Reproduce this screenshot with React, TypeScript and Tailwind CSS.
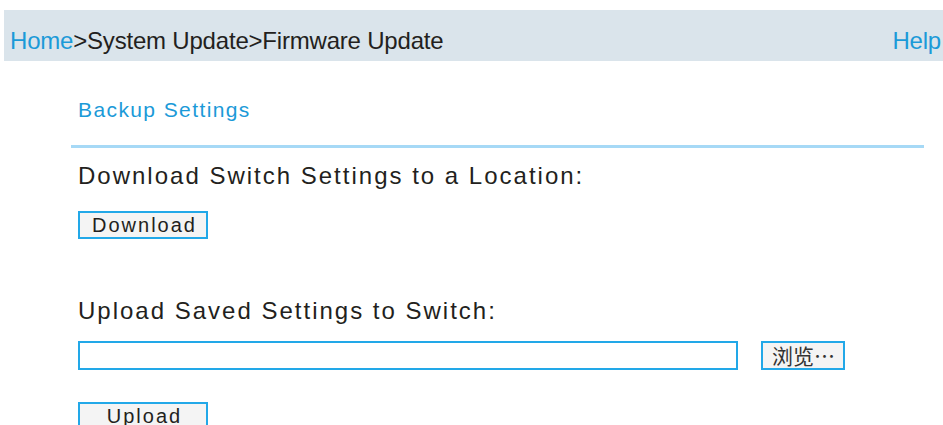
export default function App() {
  const font = { fontFamily: '"Liberation Sans", "Noto Sans CJK SC", sans-serif' };
  return (
    <div className="w-[943px] h-[425px] bg-white overflow-hidden text-[#231f20]" style={font}>
      <div className="pt-[10px] pl-[4px]">
        <div className="h-[51px] bg-[#dae4eb] flex items-start justify-between pl-[6px] pt-[19px] text-[24px] leading-none tracking-[-0.2px]">
          <div className="whitespace-nowrap">
            <span className="text-[#1b9ad8]">Home</span>
            <span>&gt;System Update&gt;Firmware Update</span>
          </div>
          <span className="text-[#1b9ad8] pr-[2px]">Help</span>
        </div>
      </div>
      <div className="pl-[71px] pr-[19px]">
        <div className="pl-[7px] mt-[39px] text-[21px] leading-[20px] tracking-[1.4px] text-[#1b9ad8]">
          Backup Settings
        </div>
        <div className="mt-[25px] h-[3px] bg-[#a6d9f6]" />
        <div className="pl-[7px]">
          <div className="mt-[16px] text-[24px] leading-[23px] tracking-[2px] whitespace-nowrap">
            Download Switch Settings to a Location:
          </div>
          <button className="mt-[24px] block w-[130px] h-[28px] border-2 border-[#22a8e8] bg-[#f4f4f4] text-[20px] leading-none tracking-[2px] pl-[3px]">
            Download
          </button>
          <div className="mt-[60px] text-[24px] leading-[23px] tracking-[2px] whitespace-nowrap">
            Upload Saved Settings to Switch:
          </div>
          <div className="mt-[19px] flex items-center gap-[23px]">
            <div className="w-[660px] h-[29px] border-2 border-[#22a8e8] bg-white" />
            <button
              className="w-[84px] h-[29px] border-2 border-[#22a8e8] bg-[#f4f4f4] text-[21px] leading-none text-[#333] flex items-center pl-[9px]"
              style={{ fontFamily: '"Noto Sans CJK SC", sans-serif' }}
            >
              浏览…
            </button>
          </div>
          <button className="mt-[32px] block w-[130px] h-[28px] border-2 border-[#22a8e8] bg-[#f4f4f4] text-[20px] leading-none tracking-[2px] pl-[3px]">
            Upload
          </button>
        </div>
      </div>
    </div>
  );
}
